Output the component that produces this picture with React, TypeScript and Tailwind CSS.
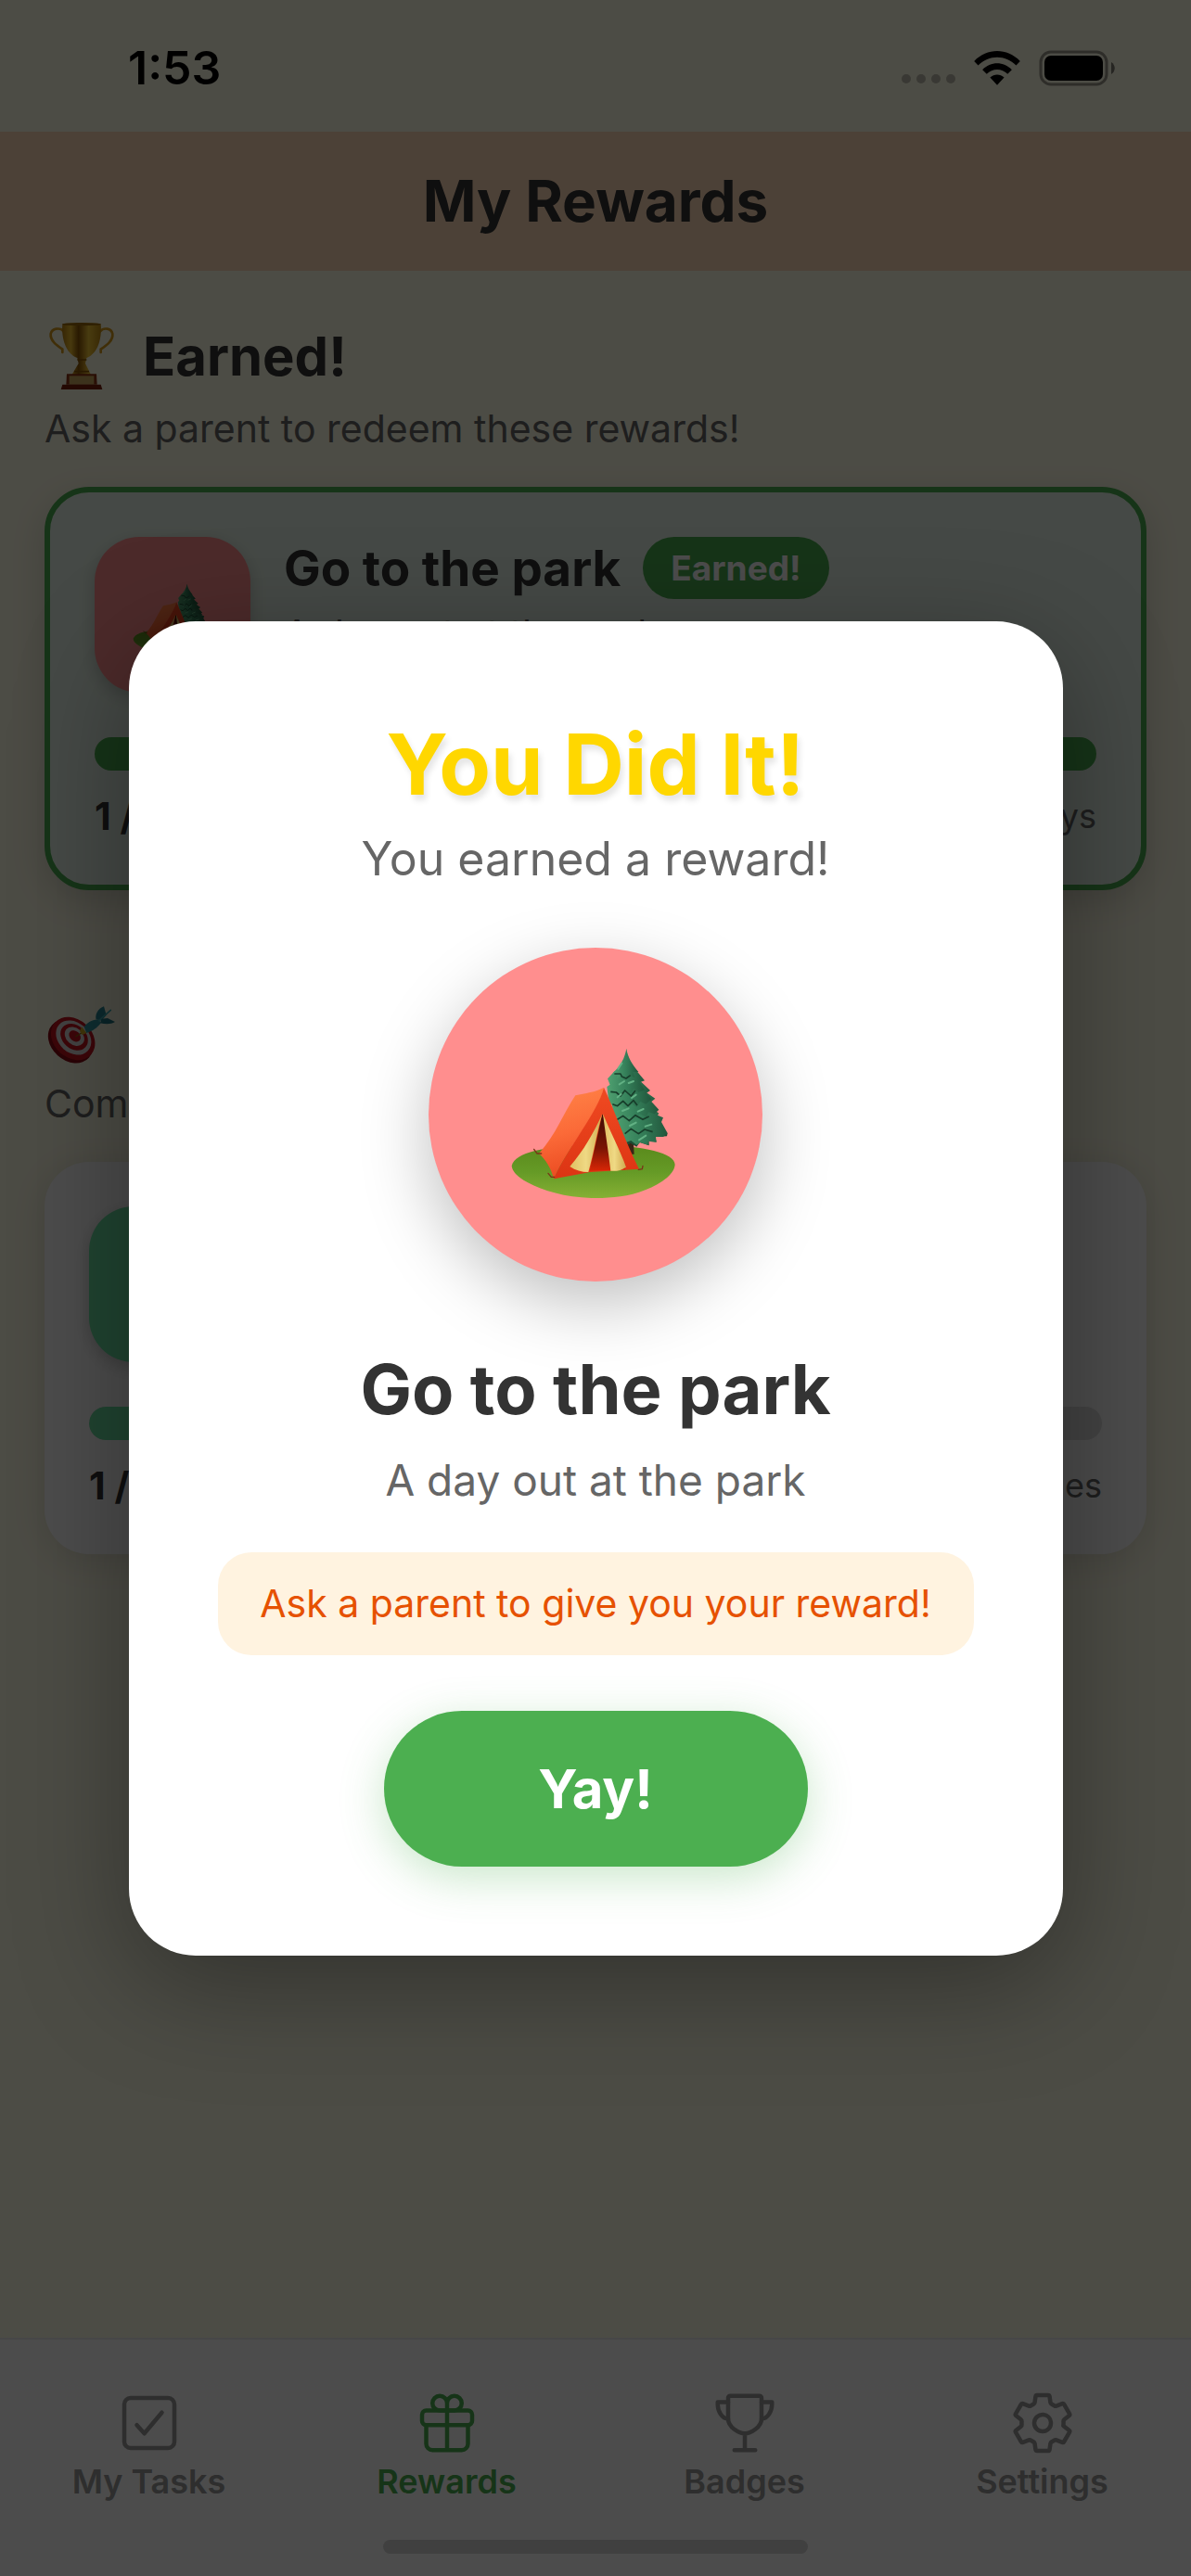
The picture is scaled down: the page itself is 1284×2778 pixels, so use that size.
import type { ReactNode } from 'react';
import { IoCheckboxOutline, IoGiftOutline, IoSettingsOutline, IoTrophyOutline } from 'react-icons/io5';

const tabs = [
  { label: 'My Tasks', icon: IoCheckboxOutline, active: false },
  { label: 'Rewards', icon: IoGiftOutline, active: true },
  { label: 'Badges', icon: IoTrophyOutline, active: false },
  { label: 'Settings', icon: IoSettingsOutline, active: false },
];

function CampingArt({ className }: { className: string }) {
  return (
    <svg viewBox="141 78 576 576" className={className} aria-hidden="true">
      <defs>
        <linearGradient id="grass" x1="0" y1="0" x2="0" y2="1">
          <stop offset="0" stopColor="#5a8a1c" />
          <stop offset="0.5" stopColor="#659a26" />
          <stop offset="1" stopColor="#86b034" />
        </linearGradient>
        <linearGradient id="tentSide" x1="0.3" y1="0" x2="0.5" y2="1">
          <stop offset="0" stopColor="#ff8347" />
          <stop offset="0.5" stopColor="#fb6a38" />
          <stop offset="1" stopColor="#e9481f" />
        </linearGradient>
        <linearGradient id="tentFront" x1="0" y1="0" x2="0" y2="1">
          <stop offset="0" stopColor="#f04a22" />
          <stop offset="1" stopColor="#dc3413" />
        </linearGradient>
        <linearGradient id="tentInside" x1="0" y1="0" x2="0" y2="1">
          <stop offset="0" stopColor="#3d0c04" />
          <stop offset="0.6" stopColor="#7a1504" />
          <stop offset="1" stopColor="#d82606" />
        </linearGradient>
        <linearGradient id="flap" x1="0" y1="0" x2="1" y2="0">
          <stop offset="0" stopColor="#e0be62" />
          <stop offset="0.5" stopColor="#efd984" />
          <stop offset="1" stopColor="#cfa94f" />
        </linearGradient>
        <linearGradient id="pine" x1="0" y1="0" x2="1" y2="0">
          <stop offset="0" stopColor="#4fa070" />
          <stop offset="0.5" stopColor="#35805a" />
          <stop offset="1" stopColor="#21563c" />
        </linearGradient>
      </defs>
      <path d="M158 532C170 488 260 468 420 466C580 464 686 490 686 528C684 560 640 590 590 610C530 634 470 637 415 636C330 634 260 612 210 586C180 570 160 552 158 532Z" fill="url(#grass)" />
      <path d="M520 440h31l3 54h-26z" fill="#3a2416" />
      <path d="M500 380l60 10 60 30 42 6-2 10-38 2 4 16-24-6 0 18-30-10-10 14-20-12-16 12-16-24z" fill="#1d4b34" />
      <path d="M486 350l60-10 60 0 28 22-4 6 18 8-6 14 20 36-14 12-24 0 2 18-26-4-2 12-24-8-12 8-18-14-16 6z" fill="url(#pine)" />
      <path d="M480 300l40-8 70 0 32 22-12 10 24 26-14 14-20-6-6 16-22-10-14 16-20-10-16 14-22-14-14 4z" fill="url(#pine)" />
      <path d="M466 276l26-18 80-2 34 32-12 8 16 20-18 16-18-8-12 18-20-14-16 20-18-16-18 12-18-20z" fill="url(#pine)" />
      <path d="M468 250l24-26 66-4 30 36-16 6 16 24-20 8-14-12-14 20-20-18-20 18-14-18-18 8 8-22z" fill="url(#pine)" />
      <path d="M529 152C533 180 548 204 568 228L550 228L556 246L540 240L526 254L514 240L498 250L500 234L484 232C510 210 524 182 529 152Z" fill="url(#pine)" />
      <path d="M490 234l20 0 4 9 14 6 14-10M478 292l18 2 14 12 14-18 20 18 14-18M484 332l16 6 18-16 16 16 18-18 12 16M496 384l22-14 20 16 20-18 24 14 20-10M524 428l20-16 24 16 20-14 26 8" fill="none" stroke="#173d2a" strokeWidth="5" strokeLinejoin="round" />
      <path d="M502 218l12-18M506 268l16-10M536 264l16-6M500 310l12-10M546 312l14-10M516 354l20-8M566 356l18-8M540 402l20-10M590 404l20-6M570 448l22-14" fill="none" stroke="#62b184" strokeWidth="6" strokeLinecap="round" />
      <path d="M246 492C302 430 326 360 364 304C396 296 428 294 456 278C440 360 340 470 294 574C286 540 268 512 246 492Z" fill="url(#tentSide)" />
      <path d="M456 278C490 350 528 460 570 542L412 552L294 574C340 470 436 360 456 278Z" fill="url(#tentFront)" />
      <path d="M451 364L526 544L410 548Z" fill="url(#tentInside)" />
      <path d="M451 364C434 420 424 490 406 552C384 552 364 546 346 534C390 484 424 424 451 364Z" fill="url(#flap)" />
      <path d="M453 364C476 420 508 480 528 536C514 546 496 550 478 548C470 480 460 420 453 364Z" fill="url(#flap)" />
      <path d="M230 478l10 14 14 0M276 556l10 12 10 0M568 544l12-2 2-10" fill="none" stroke="#7a3518" strokeWidth="4" strokeLinecap="round" />
    </svg>
  );
}

function TrophyArt() {
  return (
    <svg viewBox="54 44 228 228" className="size-[76px]" aria-hidden="true">
      <defs>
        <linearGradient id="gold" x1="0" y1="0" x2="1" y2="0">
          <stop offset="0" stopColor="#b87f10" />
          <stop offset="0.22" stopColor="#f0c030" />
          <stop offset="0.42" stopColor="#8a5606" />
          <stop offset="0.68" stopColor="#f2c636" />
          <stop offset="1" stopColor="#c08a12" />
        </linearGradient>
      </defs>
      <path d="M116 78C104 64 78 68 74 86C72 108 92 122 112 136L112 146" fill="none" stroke="#d59c1c" strokeWidth="8" strokeLinecap="round" />
      <path d="M234 78C246 64 270 68 274 86C276 108 256 122 236 136L236 146" fill="none" stroke="#d59c1c" strokeWidth="8" strokeLinecap="round" />
      <path d="M112 54C140 50 210 50 236 54C240 100 228 150 190 164L186 182L202 214L204 220L142 220L146 212L164 182L160 164C122 150 108 100 112 54Z" fill="url(#gold)" />
      <ellipse cx="174" cy="55" rx="62" ry="5" fill="#9c6a0c" />
      <path d="M160 170h30M150 208h48" stroke="#8a5606" strokeWidth="5" />
      <path d="M126 216h96l2 34h-100z" fill="#8c3414" />
      <path d="M134 222h80v28h-80z" fill="#c9a860" />
      <path d="M112 250h124l5 16h-134z" fill="#7a1e0a" />
    </svg>
  );
}

function TargetArt() {
  return (
    <svg viewBox="24 12 228 228" className="size-[76px]" aria-hidden="true">
      <ellipse cx="108" cy="159" rx="80" ry="62" transform="rotate(42 108 159)" fill="#8c0c14" />
      <ellipse cx="116" cy="150" rx="78" ry="62" transform="rotate(42 116 150)" fill="#c8141f" />
      <ellipse cx="118" cy="147" rx="63" ry="49" transform="rotate(42 118 147)" fill="#e0dcdc" />
      <ellipse cx="120" cy="145" rx="49" ry="38" transform="rotate(42 120 145)" fill="#c8141f" />
      <ellipse cx="121" cy="143" rx="35" ry="27" transform="rotate(42 121 143)" fill="#e0dcdc" />
      <ellipse cx="122" cy="142" rx="21" ry="16" transform="rotate(42 122 142)" fill="#c8141f" />
      <path d="M124 144l26-16" stroke="#8a6a10" strokeWidth="4" />
      <path d="M144 112l16 20-14 6-8-12z" fill="#d8b020" />
      <path d="M152 112C166 94 184 88 200 88L206 100C196 114 180 126 160 132Z" fill="#2f98a0" />
      <path d="M190 86C188 70 198 52 216 46L224 74L208 92Z" fill="#2a8a96" />
      <path d="M208 86L228 84L252 96C240 104 222 104 204 100Z" fill="#237a86" />
      <path d="M200 92l38-34" stroke="#3fb0b6" strokeWidth="5" strokeLinecap="round" />
    </svg>
  );
}

function StatusBar() {
  return (
    <div className="flex h-[142px] items-center justify-between pt-1 pl-[138px] pr-[82px]">
      <span className="text-[50px] leading-[60px] font-semibold text-black">1:53</span>
      <div className="flex items-center gap-5">
        <div className="flex gap-1.5 pt-6">
          {[0, 1, 2, 3].map(i => (
            <span key={i} className="size-2.5 rounded-full bg-black/25" />
          ))}
        </div>
        <svg viewBox="0 0 150 112" className="h-[37px] w-[50px]" aria-label="Wi-Fi">
          <path d="M0 33C42-11 108-11 150 33L137 47C102 12 48 12 13 47Z" />
          <path d="M27 61C54 33 96 33 123 61L109 75C90 56 60 56 41 75Z" />
          <path d="M52 86C66 74 84 74 98 86L75 111Z" />
        </svg>
        <svg viewBox="0 0 82 39" className="h-[39px] w-[82px]" aria-label="Battery">
          <rect x="2" y="2" width="71" height="35" rx="11" fill="none" stroke="#000" strokeOpacity="0.4" strokeWidth="3" />
          <rect x="6" y="6" width="63" height="27" rx="7" />
          <path d="M78 13C83 16 83 23 78 26Z" fillOpacity="0.5" />
        </svg>
      </div>
    </div>
  );
}

function RewardSection({ icon, title, hint, children }: { icon: ReactNode; title: string; hint: string; children: ReactNode }) {
  return (
    <section>
      <div className="flex h-[88px] items-center gap-[30px]">
        {icon}
        <h2 className="text-[58px] leading-[72px] font-bold text-[#333333]">{title}</h2>
      </div>
      <p className="mt-2 text-[41px] leading-[53px] text-[#666666]">{hint}</p>
      <div className="mt-9">{children}</div>
    </section>
  );
}

export default function App() {
  return (
    <div className="relative flex min-h-screen flex-col overflow-hidden bg-[#FFFDE7] font-[Inter,sans-serif]">
      <StatusBar />
      <header className="flex h-[150px] items-center justify-center bg-[#FFDAB9]">
        <h1 className="text-[62px] leading-[80px] font-bold text-[#333333]">My Rewards</h1>
      </header>

      <main className="flex flex-1 flex-col gap-[108px] px-12 pt-12">
        <RewardSection icon={<TrophyArt />} title="Earned!" hint="Ask a parent to redeem these rewards!">
          <article className="rounded-[48px] border-6 border-[#4CAF50] bg-[#E8F5E9] p-12 shadow-[0_12px_36px_rgba(0,0,0,0.15)]">
            <div className="flex gap-9">
              <div className="flex size-[168px] shrink-0 items-center justify-center rounded-[48px] bg-[#FF8E8E] shadow-[0_6px_18px_rgba(0,0,0,0.2)]">
                <CampingArt className="size-[90px]" />
              </div>
              <div>
                <div className="flex h-[67px] items-center gap-6">
                  <h3 className="text-[53px] leading-[64px] font-bold text-[#333333]">Go to the park</h3>
                  <span className="rounded-[36px] bg-[#4CAF50] px-[30px] py-3 text-[37px] leading-[43px] font-bold text-white">Earned!</span>
                </div>
                <p className="mt-3 text-[41px] leading-[50px] text-[#666666]">A day out at the park</p>
              </div>
            </div>
            <div className="mt-12 h-9 rounded-full bg-[#4CAF50]" />
            <div className="mt-6 flex justify-between text-[41px] leading-[51px]">
              <span className="font-bold text-[#333333]">1 / 1</span>
              <span className="text-[36px] text-[#666666]">days</span>
            </div>
          </article>
        </RewardSection>

        <RewardSection icon={<TargetArt />} title="Almost There" hint="Complete tasks to earn these!">
          <article className="rounded-[48px] bg-white p-12 shadow-[0_6px_36px_rgba(0,0,0,0.12)]">
            <div className="size-[168px] rounded-[48px] bg-[#6BE3A4] shadow-[0_6px_18px_rgba(0,0,0,0.2)]" />
            <div className="mt-12 h-9 overflow-hidden rounded-full bg-[#E0E0E0]">
              <div className="h-full w-1/3 rounded-full bg-[#6BE3A4]" />
            </div>
            <div className="mt-6 flex justify-between text-[41px] leading-[51px]">
              <span className="font-bold text-[#333333]">1 / 3</span>
              <span className="text-[36px] text-[#666666]">times</span>
            </div>
          </article>
        </RewardSection>
      </main>

      <nav className="border-t-2 border-[#EEEEEE] bg-white pt-[54px] pb-6">
        <div className="flex">
          {tabs.map(({ label, icon: Icon, active }) => (
            <a
              key={label}
              href="#"
              className={`flex flex-1 flex-col items-center gap-1 text-[36px] leading-[46px] font-semibold ${active ? 'text-[#4CAF50]' : 'text-[#999999]'}`}
            >
              <Icon className="size-[72px]" />
              <span>{label}</span>
            </a>
          ))}
        </div>
        <div className="mx-auto mt-10 h-[15px] w-[458px] rounded-full bg-[#D8D8D8]" />
      </nav>

      <div className="absolute inset-0 flex items-center justify-center bg-black/70">
        <div
          role="dialog"
          aria-modal="true"
          aria-labelledby="reward-title"
          className="flex w-full max-w-[1007px] flex-col items-center rounded-[72px] bg-white p-24 text-center shadow-[0_30px_120px_rgba(0,0,0,0.35)]"
        >
          <h2 id="reward-title" className="text-[91px] leading-[116px] font-bold text-[#FFD700] [text-shadow:3px_6px_6px_rgba(0,0,0,0.1)]">
            You Did It!
          </h2>
          <p className="mt-3 text-[50px] leading-[64px] text-[#666666]">You earned a reward!</p>
          <div className="mt-16 flex size-[360px] items-center justify-center rounded-full bg-[#FF8E8E] shadow-[0_24px_72px_rgba(0,0,0,0.25)]">
            <CampingArt className="size-48" />
          </div>
          <h3 className="mt-[68px] text-[74px] leading-[96px] font-bold text-[#333333]">Go to the park</h3>
          <p className="mt-5 text-[46px] leading-[60px] text-[#666666]">A day out at the park</p>
          <p className="mt-12 w-full rounded-[36px] bg-[#FFF3E0] py-[30px] text-[41px] leading-[51px] text-[#E65100]">
            Ask a parent to give you your reward!
          </p>
          <button
            type="button"
            className="mt-[60px] w-[457px] rounded-full bg-[#4CAF50] py-12 text-[58px] leading-[72px] font-bold text-white shadow-[0_12px_48px_rgba(76,175,80,0.3)]"
          >
            Yay!
          </button>
        </div>
      </div>
    </div>
  );
}
